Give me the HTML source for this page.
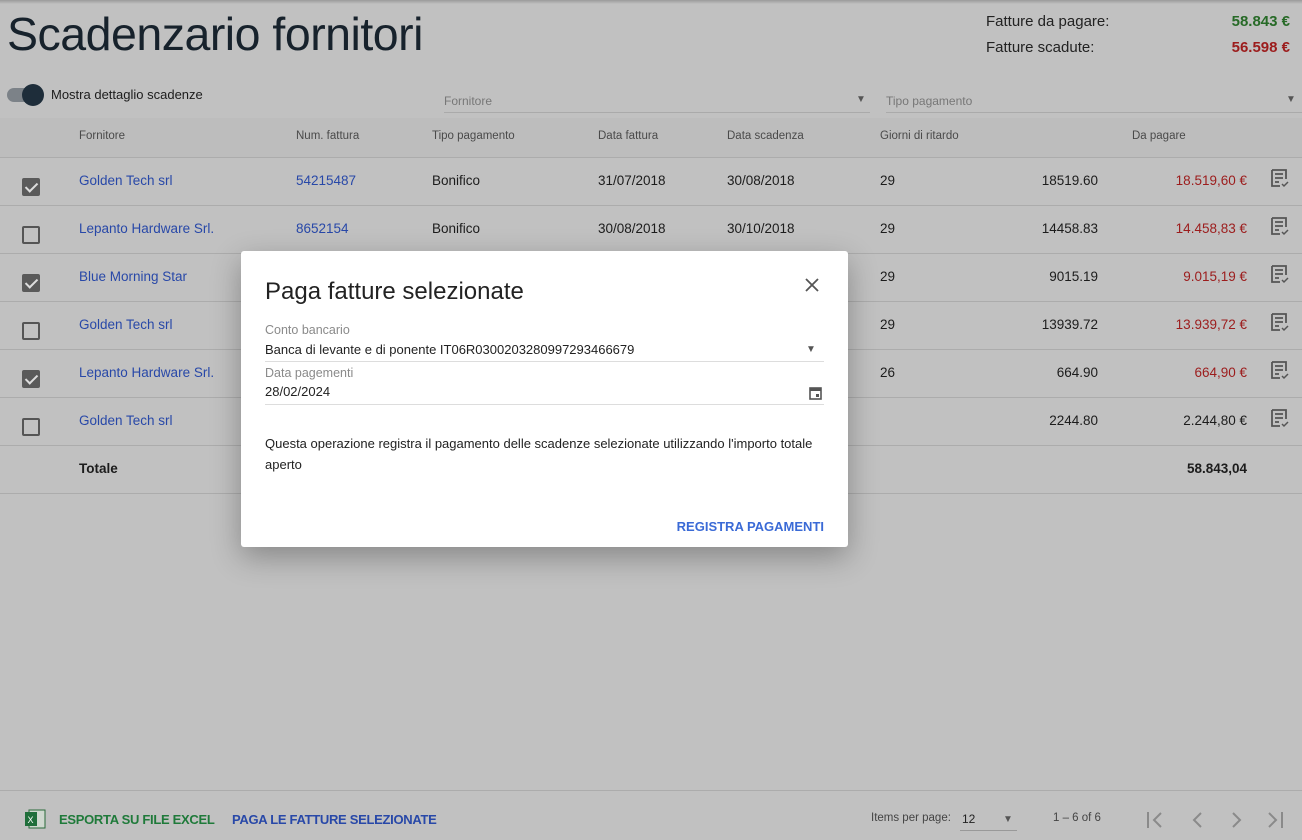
<!DOCTYPE html>
<html><head><meta charset="utf-8"><style>
*{margin:0;padding:0;box-sizing:border-box}
body{width:1302px;height:840px;background:#c1c1c1;font-family:"Liberation Sans",sans-serif;position:relative;overflow:hidden;color:#1c1c1c;font-size:13.5px}
.a{position:absolute;white-space:nowrap}
.line{position:absolute;left:0;width:1302px;height:1px;background:#acacac}
.hd{color:#4a4a4a;font-size:11.5px}
.lk{color:#2848a8}
.red{color:#9c1c1c}
.cb{position:absolute;left:22px;width:18px;height:18px;border:2px solid #555;border-radius:2px}
.cb.on{background:#5a5a5a;border-color:#5a5a5a}
.cb.on:after{content:"";position:absolute;left:4px;top:0px;width:5px;height:10px;border:solid #ddd;border-width:0 2px 2px 0;transform:rotate(45deg)}
</style></head><body>
<div style="position:absolute;left:0;top:0;width:1302px;height:4px;background:linear-gradient(#9a9a9a,#c1c1c1)"></div>
<div class="a" style="left:7px;top:7px;font-size:46.5px;font-weight:300;color:#17222c;letter-spacing:-0.5px">Scadenzario fornitori</div>
<div class="a" style="left:986px;top:13px;font-size:15px;color:#222">Fatture da pagare:</div>
<div class="a" style="right:12px;top:13px;font-size:15px;font-weight:bold;color:#276a27">58.843 €</div>
<div class="a" style="left:986px;top:39px;font-size:15px;color:#222">Fatture scadute:</div>
<div class="a" style="right:12px;top:39px;font-size:15px;font-weight:bold;color:#9c1c1c">56.598 €</div>
<div style="position:absolute;left:7px;top:88px;width:34px;height:14px;border-radius:7px;background:#7c8288"></div>
<div style="position:absolute;left:22px;top:84px;width:22px;height:22px;border-radius:50%;background:#1e2d3a"></div>
<div class="a" style="left:51px;top:87px;font-size:13px">Mostra dettaglio scadenze</div>
<div class="a" style="left:444px;top:94px;font-size:12px;color:#777">Fornitore</div>
<div class="a" style="left:856px;top:94px;font-size:10px;color:#555">▼</div>
<div style="position:absolute;left:444px;top:112px;width:426px;height:1px;background:#aaa"></div>
<div class="a" style="left:886px;top:94px;font-size:12px;color:#777">Tipo pagamento</div>
<div class="a" style="left:1286px;top:94px;font-size:10px;color:#555">▼</div>
<div style="position:absolute;left:886px;top:112px;width:416px;height:1px;background:#aaa"></div>
<div style="position:absolute;left:0;top:118px;width:1302px;height:40px;background:#bdbdbd"></div>
<div class="a hd" style="left:79px;top:130px">Fornitore</div>
<div class="a hd" style="left:296px;top:130px">Num. fattura</div>
<div class="a hd" style="left:432px;top:130px">Tipo pagamento</div>
<div class="a hd" style="left:598px;top:130px">Data fattura</div>
<div class="a hd" style="left:727px;top:130px">Data scadenza</div>
<div class="a hd" style="left:880px;top:130px">Giorni di ritardo</div>
<div class="a hd" style="left:1132px;top:130px">Da pagare</div>
<div class="line" style="top:157px"></div>
<div class="line" style="top:205px"></div>
<div class="line" style="top:253px"></div>
<div class="line" style="top:301px"></div>
<div class="line" style="top:349px"></div>
<div class="line" style="top:397px"></div>
<div class="line" style="top:445px"></div>
<div class="line" style="top:493px"></div>
<div class="line" style="top:790px"></div>

<div class="cb on" style="top:178px"></div><div class="a lk" style="left:79px;top:173px">Golden Tech srl</div><div class="a lk" style="left:296px;top:173px">54215487</div><div class="a" style="left:432px;top:173px">Bonifico</div><div class="a" style="left:598px;top:173px">31/07/2018</div><div class="a" style="left:727px;top:173px">30/08/2018</div><div class="a" style="left:880px;top:173px">29</div><div class="a" style="right:204px;top:173px">18519.60</div><div class="a red" style="right:55px;top:173px">18.519,60 €</div>
<div class="cb" style="top:226px"></div><div class="a lk" style="left:79px;top:221px">Lepanto Hardware Srl.</div><div class="a lk" style="left:296px;top:221px">8652154</div><div class="a" style="left:432px;top:221px">Bonifico</div><div class="a" style="left:598px;top:221px">30/08/2018</div><div class="a" style="left:727px;top:221px">30/10/2018</div><div class="a" style="left:880px;top:221px">29</div><div class="a" style="right:204px;top:221px">14458.83</div><div class="a red" style="right:55px;top:221px">14.458,83 €</div>
<div class="cb on" style="top:274px"></div><div class="a lk" style="left:79px;top:269px">Blue Morning Star</div><div class="a" style="left:880px;top:269px">29</div><div class="a" style="right:204px;top:269px">9015.19</div><div class="a red" style="right:55px;top:269px">9.015,19 €</div>
<div class="cb" style="top:322px"></div><div class="a lk" style="left:79px;top:317px">Golden Tech srl</div><div class="a" style="left:880px;top:317px">29</div><div class="a" style="right:204px;top:317px">13939.72</div><div class="a red" style="right:55px;top:317px">13.939,72 €</div>
<div class="cb on" style="top:370px"></div><div class="a lk" style="left:79px;top:365px">Lepanto Hardware Srl.</div><div class="a" style="left:880px;top:365px">26</div><div class="a" style="right:204px;top:365px">664.90</div><div class="a red" style="right:55px;top:365px">664,90 €</div>
<div class="cb" style="top:418px"></div><div class="a lk" style="left:79px;top:413px">Golden Tech srl</div><div class="a" style="right:204px;top:413px">2244.80</div><div class="a" style="right:55px;top:413px">2.244,80 €</div>
<div class="a" style="left:79px;top:461px;font-weight:bold">Totale</div><div class="a" style="right:55px;top:461px;font-weight:bold">58.843,04</div>

<svg style="position:absolute;left:1270px;top:168px" width="22" height="270" viewBox="0 0 22 270">
<g id="ic" fill="none" stroke="#555" stroke-width="1.8"><path d="M2 2h14v9M2 2v16h8"/><path d="M5 6h8M5 10h8M5 14h4"/><path d="M12 16l2 2 4-4" stroke-width="1.5"/></g>
<use href="#ic" y="48"/><use href="#ic" y="96"/><use href="#ic" y="144"/><use href="#ic" y="192"/><use href="#ic" y="240"/>
</svg>

<div style="position:absolute;left:241px;top:251px;width:607px;height:296px;background:#fff;border-radius:3px;box-shadow:0 10px 30px rgba(0,0,0,.3)">
<div class="a" style="left:24px;top:27px;font-size:24px;color:#222">Paga fatture selezionate</div>
<svg style="position:absolute;left:564px;top:27px" width="14" height="14"><path d="M1 1L13 13M13 1L1 13" stroke="#555" stroke-width="1.8"/></svg>
<div class="a" style="left:24px;top:72px;font-size:12.5px;color:#8a8a8a">Conto bancario</div>
<div class="a" style="left:24px;top:91px;font-size:13px;color:#222">Banca di levante e di ponente IT06R0300203280997293466679</div>
<div class="a" style="left:565px;top:93px;font-size:10px;color:#555">▼</div>
<div style="position:absolute;left:24px;top:110px;width:559px;height:1px;background:#ddd"></div>
<div class="a" style="left:24px;top:115px;font-size:12.5px;color:#8a8a8a">Data pagementi</div>
<div class="a" style="left:24px;top:133px;font-size:13px;color:#222">28/02/2024</div>
<svg style="position:absolute;left:568px;top:135px" width="13" height="14"><rect x="1" y="2" width="11" height="11" fill="none" stroke="#555" stroke-width="1.6"/><rect x="1" y="2" width="11" height="3" fill="#555"/><rect x="7" y="8" width="3" height="3" fill="#555"/></svg>
<div style="position:absolute;left:24px;top:153px;width:559px;height:1px;background:#ddd"></div>
<div style="position:absolute;left:24px;top:182px;width:560px;font-size:13px;line-height:21px;color:#222">Questa operazione registra il pagamento delle scadenze selezionate utilizzando l'importo totale aperto</div>
<div class="a" style="right:24px;top:268px;font-size:13px;font-weight:bold;color:#3a6ad6">REGISTRA PAGAMENTI</div>
</div>

<svg style="position:absolute;left:24px;top:809px" width="22" height="20"><rect x="5" y="1" width="16" height="18" fill="#cfd8cf" stroke="#2a6a3a"/><rect x="1" y="3" width="12" height="14" fill="#1f6e3a"/><text x="3.5" y="14" font-size="9" fill="#fff" font-family="Liberation Sans">X</text></svg>
<div class="a" style="left:59px;top:812px;font-size:13px;font-weight:bold;color:#1f7a3a;letter-spacing:-0.3px">ESPORTA SU FILE EXCEL</div>
<div class="a" style="left:232px;top:812px;font-size:13px;font-weight:bold;color:#2848a8;letter-spacing:-0.3px">PAGA LE FATTURE SELEZIONATE</div>
<div class="a" style="left:871px;top:812px;font-size:11.5px;color:#444">Items per page:</div>
<div class="a" style="left:962px;top:812px;font-size:12px;color:#222">12</div>
<div class="a" style="left:1003px;top:814px;font-size:10px;color:#555">▼</div>
<div style="position:absolute;left:960px;top:830px;width:57px;height:1px;background:#999"></div>
<div class="a" style="left:1053px;top:812px;font-size:11.5px;color:#444">1 – 6 of 6</div>
<svg style="position:absolute;left:1146px;top:810px" width="140" height="20" fill="none" stroke="#8a8a8a" stroke-width="2"><path d="M2 2v16M15 3l-7 7 7 7"/><path d="M55 3l-7 7 7 7"/><path d="M87 3l7 7-7 7"/><path d="M123 3l7 7-7 7M136 2v16"/></svg>
</body></html>
